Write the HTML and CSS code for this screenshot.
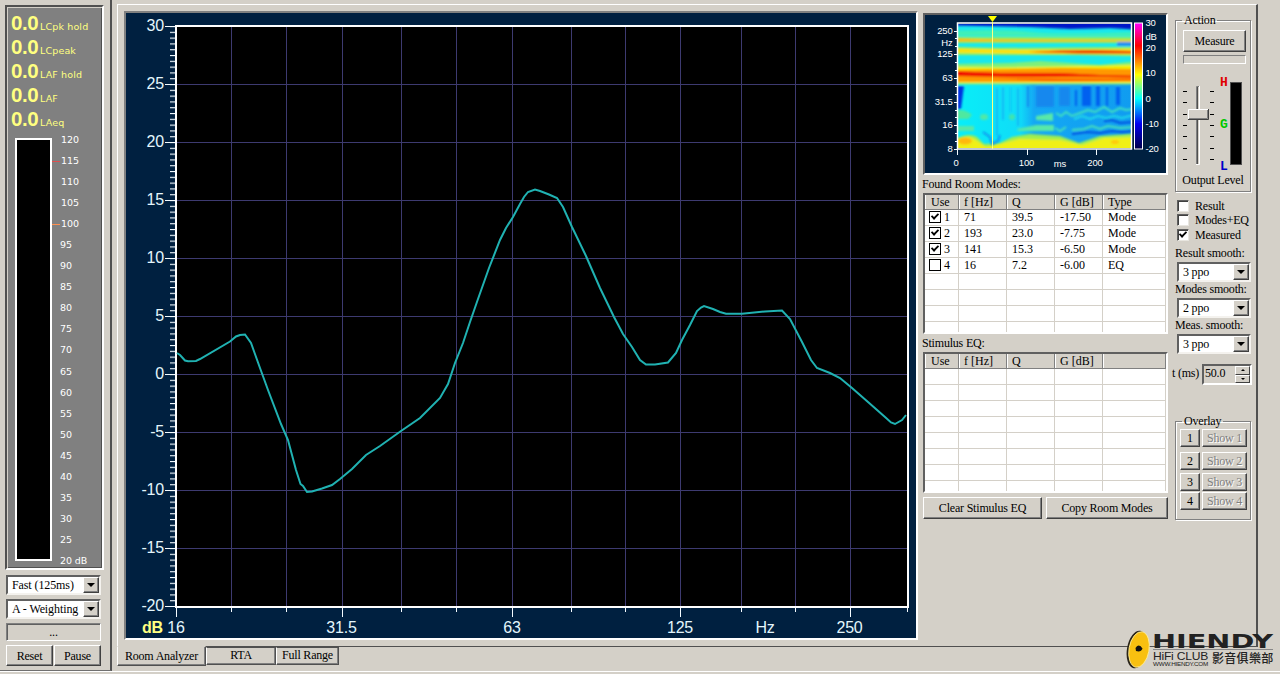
FILE: index.html
```html
<!DOCTYPE html>
<html lang="en">

<head>
  <meta charset="UTF-8">
  <meta name="viewport" content="width=device-width, initial-scale=1.0">
  <title>Room Analyzer</title>
  <link rel="stylesheet" href="styles.css">
</head>

<body>
  <div class="window">
    <div class="level-panel">
      <div class="meter">
        <div class="reading"><b>0.0</b><span>LCpk hold</span></div>
        <div class="reading"><b>0.0</b><span>LCpeak</span></div>
        <div class="reading"><b>0.0</b><span>LAF hold</span></div>
        <div class="reading"><b>0.0</b><span>LAF</span></div>
        <div class="reading"><b>0.0</b><span>LAeq</span></div>
        <div class="level">
          <div class="level-bar"></div>
          <ul class="scale">
            <li class="wide">120</li>
            <li class="wide red">115</li>
            <li class="wide">110</li>
            <li class="wide">105</li>
            <li class="wide orange">100</li>
            <li>95</li>
            <li>90</li>
            <li>85</li>
            <li>80</li>
            <li>75</li>
            <li>70</li>
            <li>65</li>
            <li>60</li>
            <li>55</li>
            <li>50</li>
            <li>45</li>
            <li>40</li>
            <li>35</li>
            <li>30</li>
            <li>25</li>
            <li>20 dB</li>
          </ul>
        </div>
      </div>
      <div class="combo"><span>Fast (125ms)</span><i class="arrow"></i></div>
      <div class="combo"><span>A - Weighting</span><i class="arrow"></i></div>
      <div class="status">...</div>
      <div class="button-row">
        <button>Reset</button>
        <button>Pause</button>
      </div>
    </div>

    <div class="main">
      <div class="page">
        <!-- frequency response -->
        <svg class="chart" viewBox="126 13 790 625" width="790" height="625">
          <defs>
            <pattern id="minor" x="170" y="26" width="6" height="5.8" patternUnits="userSpaceOnUse">
              <rect width="6" height="1.1" fill="#f4fbff"/>
            </pattern>
          </defs>
          <rect x="176" y="26" width="732" height="580" fill="#000"/>
          <path class="grid" d="M231.500 27V606M286.500 27V606M342.500 27V606M401.500 27V606M456.500 27V606M512.500 27V606M571.500 27V606M625.500 27V606M680.500 27V606M741.500 27V606M795.500 27V606M850.500 27V606"/>
          <path class="grid" d="M177 84.500H907M177 142.500H907M177 200.500H907M177 258.500H907M177 316.500H907M177 374.500H907M177 432.500H907M177 490.500H907M177 548.500H907"/>
          <rect x="170" y="26" width="6" height="580" fill="url(#minor)"/>
          <path class="tick" d="M165 26.500H176M165 84.500H176M165 142.500H176M165 200.500H176M165 258.500H176M165 316.500H176M165 374.500H176M165 432.500H176M165 490.500H176M165 548.500H176M165 606.500H176"/>
          <path class="tick" d="M176.500 607V617M342.500 607V617M512.500 607V617M680.500 607V617M850.500 607V617M231.500 607V612M286.500 607V612M401.500 607V612M456.500 607V612M571.500 607V612M625.500 607V612M741.500 607V612M795.500 607V612M907.500 607V612"/>
          <rect x="176" y="26" width="732" height="581" fill="none" stroke="#fff" stroke-width="2"/>
          <polyline class="curve" points="177,353 180,355 185,360.500 188,361.300 196,361 200,359 230,341.500 236,336.500 240,335 245,334.500 251,343 260,368 268,390 281,424 288,440 296,470 300.500,484 303,486 307,492 312,491.500 322,488.500 332,485 340,479 352,469 366,455 380,446 401,431 420,418 440,398 448,384 455,363 463,343 470,322 478,299 489,268 500,240 506,228 513,217 520,204 524,197 528,192 535,189.500 540,191 549,194.500 557,198 563,207 572,227 586,256 600,288 614,317 623,334 632,347 640,360 646,364.500 655,364.500 668,362.500 676,353 682,340 690,325 697,311 701,307.500 704,306 713,309 720,312 726,313.700 742,313.700 765,311.500 782,310.500 790,319 802,342 811,360 817,368 830,373 840,378 852,388 868,402 885,417 891,422.500 895,424 902,420 906,415"/>
          <g class="axis-y">
            <text x="164" y="31">30</text>
            <text x="164" y="89">25</text>
            <text x="164" y="147">20</text>
            <text x="164" y="205">15</text>
            <text x="164" y="263">10</text>
            <text x="164" y="321">5</text>
            <text x="164" y="379">0</text>
            <text x="164" y="437">-5</text>
            <text x="164" y="495">-10</text>
            <text x="164" y="553">-15</text>
            <text x="164" y="611">-20</text>
          </g>
          <g class="axis-x">
            <text x="176" y="633">16</text>
            <text x="341.500" y="633">31.5</text>
            <text x="512" y="633">63</text>
            <text x="680" y="633">125</text>
            <text x="765" y="633">Hz</text>
            <text x="849.500" y="633">250</text>
          </g>
          <text class="axis-unit" x="142" y="633">dB</text>
        </svg>

        <div class="modes">
          <!-- decay spectrogram -->
          <svg class="spectrogram" viewBox="925 15 241 158" width="241" height="158">
            <defs>
              <clipPath id="plot"><rect x="958" y="24" width="173" height="124"/></clipPath>
              <filter id="soft" x="-10%" y="-20%" width="120%" height="140%"><feGaussianBlur stdDeviation="1"/></filter>
              <linearGradient id="bar" x1="0" y1="0" x2="0" y2="1">
                <stop offset="0" stop-color="#f0f"/>
                <stop offset=".18" stop-color="#f00"/>
                <stop offset=".3" stop-color="#ff8000"/>
                <stop offset=".41" stop-color="#ff0"/>
                <stop offset=".5" stop-color="#80ff80"/>
                <stop offset=".6" stop-color="#0ff"/>
                <stop offset=".7" stop-color="#0080ff"/>
                <stop offset=".8" stop-color="#0000f0"/>
                <stop offset="1" stop-color="#000048"/>
              </linearGradient>
              <linearGradient id="base" x1="0" y1="0" x2="1" y2="0">
                <stop offset="0" stop-color="#08eef8"/>
                <stop offset=".36" stop-color="#10dcf8"/>
                <stop offset=".44" stop-color="#14a8f4"/>
                <stop offset="1" stop-color="#109cf0"/>
              </linearGradient>
            </defs>
            <g clip-path="url(#plot)">
              <rect x="957" y="23" width="175" height="127" fill="url(#base)"/>
              <rect x="957" y="23" width="175" height="60" fill="#18e8ec"/>
              <g filter="url(#soft)">
                <path d="M950 20H1140V30L1110 28 1070 29 1030 27 950 25.500Z" fill="#0018c8"/>
                <path d="M950 31Q1000 29 1030 32T1140 32V36H950Z" fill="#40f0b8"/>
                <path d="M950 37H1140V43H950Z" fill="#90f060"/>
                <path d="M950 38.500L1000 39.500 1140 40V41.500H950Z" fill="#ffb800"/>
                <path d="M950 47L1000 48 1140 47V56L1080 55 950 55Z" fill="#a0f058"/>
                <path d="M950 48.500L1020 50 1140 49V54.500L1050 54 950 52.500Z" fill="#ffe000"/>
                <path d="M1028 52L1060 50.500 1090 50 1140 51V53.500L1080 53.500Z" fill="#f03000"/>
                <path d="M950 64L1010 63 1040 61 1100 65 1140 61V70H950Z" fill="#80f078"/>
                <path d="M950 67L1000 67.500 1140 65V84H950Z" fill="#f4f000"/>
                <path d="M950 70L1010 69 1060 68 1140 69V81.500L1070 82 950 82Z" fill="#ff9800"/>
                <path d="M950 71L1000 73 1060 73 1100 75 1140 76V77.500L1080 76.500 1020 77 950 76Z" fill="#f00000"/>
                <path d="M990 78L1060 79 1140 79V80.500L1050 81Z" fill="#ff5000"/>
                <path d="M950 83H1140V84.500H950Z" fill="#78f080"/>
                <path d="M956 86H964L961 109H956Z" fill="#0030e0"/>
                <path d="M1082 86H1091V106H1082ZM1096 86H1100V106H1096ZM1116 87H1120V105H1116ZM1106 87H1108V106H1106ZM1075 90H1077V106H1075Z" fill="#0060f0"/>
                <path d="M1027 86H1029V107H1027ZM1036 86H1054V107H1036ZM1059 87H1070V106H1059Z" fill="#1888ee"/>
                <path d="M996 88H998V136H996ZM1002 87H1004V120H1002ZM1010 87H1011V112H1010ZM1017 88H1019V126H1017Z" fill="#18b8f4"/>
                <path d="M1117 42H1140V46H1117Z" fill="#2090f0"/>
                <path d="M950 142Q968 131 977 137L984 144 1000 143 1012 137 1030 134 1060 136 1079 143 1100 136 1140 133V152H950Z" fill="#a0ee50"/>
                <path d="M950 142Q966 132 977 141L986 147 1004 143 1020 139 1060 140 1082 145 1104 138 1140 137V152H950Z" fill="#f0f018"/>
                <ellipse cx="965" cy="141" rx="7" ry="3.500" fill="#ffb810"/>
                <ellipse cx="1115" cy="142" rx="4" ry="2" fill="#ffc810"/>
                <path d="M950 112Q963 107 972 115L968 119H950Z" fill="#50e8a0"/>
                <path d="M950 126H974V131H950ZM1017 129L1036 125 1054 125V131H1018ZM1036 116L1053 113V121L1036 120Z" fill="#58e8a8"/>
                <ellipse cx="984" cy="117" rx="4" ry="3" fill="#50e8a8"/>
                <ellipse cx="1012" cy="117" rx="3" ry="3" fill="#40e4b0"/>
              </g>
              <g class="ripples" filter="url(#soft)">
                <path d="M1056 113L1061 116 1066 112 1072 116 1080 113 1088 110 1095 112 1104 107 1112 112 1120 108 1126 110 1134 109" stroke="#40e0c0"/>
                <path d="M1074 119L1082 116 1090 119 1098 116 1106 118 1114 116 1122 118 1134 115" stroke="#20d8e8"/>
                <path d="M1055 128L1060 131 1066 127M1072 130L1084 129 1092 126 1100 129 1108 126 1120 128 1134 127" stroke="#48e0b8"/>
                <path d="M1104 121L1112 120 1120 123 1134 122M1072 134L1087 132 1100 133 1112 131 1122 132 1134 131" stroke="#0050e0"/>
                <path d="M983 132L990 137 992 144 998 141 1000 135" stroke="#1090f0"/>
              </g>
            </g>
            <rect x="957.500" y="23" width="174" height="126" fill="none" stroke="#fff" stroke-width="1.500"/>
            <path d="M992.500 22V149" stroke="#ffff80"/>
            <path d="M988 16H997L992.500 22Z" fill="#ff0"/>
            <rect x="1134.500" y="23" width="8" height="126" fill="url(#bar)" stroke="#fff"/>
            <path class="tick" d="M954 31.500H957M954 54.500H957M954 78.500H957M954 102.500H957M954 125.500H957M954 149.500H957M957.500 149V155M1027.500 149V155M1096.500 149V155M955 38.500H957M955 46.500H957M955 62.500H957M955 70.500H957M955 86.500H957M955 94.500H957M955 110.500H957M955 117.500H957M955 133.500H957M955 141.500H957"/>
            <g class="small end">
              <text x="952.500" y="34">250</text>
              <text x="952.500" y="46">Hz</text>
              <text x="952.500" y="57">125</text>
              <text x="952.500" y="81">63</text>
              <text x="952.500" y="105">31.5</text>
              <text x="952.500" y="128">16</text>
              <text x="952.500" y="152">8</text>
            </g>
            <g class="small">
              <text x="1145.500" y="26">30</text>
              <text x="1145.500" y="40">dB</text>
              <text x="1145.500" y="51">20</text>
              <text x="1145.500" y="76">10</text>
              <text x="1145.500" y="102">0</text>
              <text x="1145.500" y="127">-10</text>
              <text x="1145.500" y="152">-20</text>
            </g>
            <g class="small mid">
              <text x="956" y="166">0</text>
              <text x="1026.500" y="166">100</text>
              <text x="1060" y="166.500">ms</text>
              <text x="1095" y="166">200</text>
            </g>
          </svg>

          <div class="caption">Found Room Modes:</div>
          <div class="list">
            <table>
              <thead>
                <tr><th>Use</th><th>f [Hz]</th><th>Q</th><th>G [dB]</th><th>Type</th></tr>
              </thead>
              <tbody>
                <tr><td><i class="check on"></i>1</td><td>71</td><td>39.5</td><td>-17.50</td><td>Mode</td></tr>
                <tr><td><i class="check on"></i>2</td><td>193</td><td>23.0</td><td>-7.75</td><td>Mode</td></tr>
                <tr><td><i class="check on"></i>3</td><td>141</td><td>15.3</td><td>-6.50</td><td>Mode</td></tr>
                <tr><td><i class="check"></i>4</td><td>16</td><td>7.2</td><td>-6.00</td><td>EQ</td></tr>
                <tr><td></td><td></td><td></td><td></td><td></td></tr>
                <tr><td></td><td></td><td></td><td></td><td></td></tr>
                <tr><td></td><td></td><td></td><td></td><td></td></tr>
                <tr><td></td><td></td><td></td><td></td><td></td></tr>
              </tbody>
            </table>
          </div>

          <div class="caption">Stimulus EQ:</div>
          <div class="list">
            <table>
              <thead>
                <tr><th>Use</th><th>f [Hz]</th><th>Q</th><th>G [dB]</th><th></th></tr>
              </thead>
              <tbody>
                <tr><td></td><td></td><td></td><td></td><td></td></tr>
                <tr><td></td><td></td><td></td><td></td><td></td></tr>
                <tr><td></td><td></td><td></td><td></td><td></td></tr>
                <tr><td></td><td></td><td></td><td></td><td></td></tr>
                <tr><td></td><td></td><td></td><td></td><td></td></tr>
                <tr><td></td><td></td><td></td><td></td><td></td></tr>
                <tr><td></td><td></td><td></td><td></td><td></td></tr>
                <tr><td></td><td></td><td></td><td></td><td></td></tr>
              </tbody>
            </table>
          </div>
          <div class="list-buttons">
            <button>Clear Stimulus EQ</button>
            <button>Copy Room Modes</button>
          </div>
        </div>

        <div class="controls">
          <fieldset class="action">
            <legend>Action</legend>
            <button>Measure</button>
            <div class="progress"></div>
            <svg class="output" viewBox="1180 74 66 98" width="66" height="98">
              <path d="M1183 91.500H1187M1183 102.500H1187M1183 114.500H1187M1183 125.500H1187M1183 136.500H1187M1183 148.500H1187M1183 159.500H1187M1210 91.500H1214M1210 102.500H1214M1210 114.500H1214M1210 125.500H1214M1210 136.500H1214M1210 148.500H1214M1210 159.500H1214" stroke="#000"/>
              <path d="M1196.500 165V86.500H1199" fill="none" stroke="#808080"/>
              <path d="M1197.500 87V164" stroke="#505050"/>
              <path d="M1199.500 86V164.500H1196" fill="none" stroke="#fff"/>
              <rect x="1188" y="109" width="21" height="11" fill="#d4d0c8"/>
              <path d="M1188.500 119V109.500H1208" fill="none" stroke="#fff"/>
              <path d="M1189 118.500H1207.500V110" fill="none" stroke="#808080"/>
              <path d="M1188 119.500H1208.500V109" fill="none" stroke="#404040"/>
              <rect x="1230.500" y="82.500" width="11" height="82" fill="#000" stroke="#505050"/>
              <text class="mark high" x="1220" y="85.500">H</text>
              <text class="mark good" x="1220" y="127.500">G</text>
              <text class="mark low" x="1220" y="169.500">L</text>
            </svg>
            <div class="output-label">Output Level</div>
          </fieldset>

          <div class="options">
            <label><i class="check"></i>Result</label>
            <label><i class="check"></i>Modes+EQ</label>
            <label><i class="check on"></i>Measured</label>
          </div>

          <div class="smooth">
            <span>Result smooth:</span>
            <div class="combo"><span>3 ppo</span><i class="arrow"></i></div>
            <span>Modes smooth:</span>
            <div class="combo"><span>2 ppo</span><i class="arrow"></i></div>
            <span>Meas. smooth:</span>
            <div class="combo"><span>3 ppo</span><i class="arrow"></i></div>
          </div>

          <div class="time">
            <span>t (ms)</span>
            <div class="spinner">
              <span>50.0</span>
              <div class="spin"><i class="up"></i><i class="down"></i></div>
            </div>
          </div>

          <fieldset class="overlay">
            <legend>Overlay</legend>
            <div class="overlay-grid">
              <button>1</button><button disabled>Show 1</button>
              <button>2</button><button disabled>Show 2</button>
              <button>3</button><button disabled>Show 3</button>
              <button>4</button><button disabled>Show 4</button>
            </div>
          </fieldset>
        </div>
      </div>

      <div class="tabs">
        <div class="tab active">Room Analyzer</div>
        <div class="tab rta">RTA</div>
        <div class="tab range">Full Range</div>
      </div>
    </div>
  </div>

  <svg class="logo" viewBox="0 0 152 42" width="152" height="42">
    <ellipse cx="12" cy="21.500" rx="10" ry="19" fill="#2a2418" transform="rotate(10 12 21.500)"/>
    <ellipse cx="14" cy="21.500" rx="10" ry="18" fill="#f8c010" stroke="#fff0a0" stroke-width=".8" transform="rotate(10 14 21.500)"/>
    <path d="M10.500 20Q14 15 17.500 20.500Q16 24.500 11 23Z" fill="#111"/>
    <text class="logo-name" x="27" y="19.500" textLength="121" lengthAdjust="spacingAndGlyphs">HIENDY</text>
    <path d="M28 21.500H148" stroke="#888"/>
    <text class="logo-club" x="28" y="32" textLength="55" lengthAdjust="spacingAndGlyphs">HiFi CLUB</text>
    <text class="logo-url" x="28" y="37.500" textLength="55" lengthAdjust="spacingAndGlyphs">WWW.HIENDY.COM</text>
    <text class="logo-cjk" x="87" y="35" textLength="61">影音俱樂部</text>
  </svg>
</body>

</html>
```
FILE: styles.css
```css
* {
  box-sizing: border-box;
}

body {
  margin: 0;
  width: 1280px;
  height: 674px;
  overflow: hidden;
  background: #d4d0c8;
  color: #000;
  font-family: "Liberation Serif", serif;
  font-size: 12px;
  letter-spacing: -0.2px;
  line-height: 14px;
}

.window {
  display: flex;
  height: 672px;
  border-bottom: 1px solid #fff;
}

button {
  padding: 0;
  border: 1px solid;
  border-color: #fff #404040 #404040 #fff;
  box-shadow: inset -1px -1px #808080;
  background: #d4d0c8;
  color: #000;
  font: inherit;
  letter-spacing: inherit;
}

button:disabled {
  color: #808080;
  text-shadow: 1px 1px #fff;
}

/* left level meter */
.level-panel {
  width: 112px;
  padding: 5px 10px 0 5px;
  border-right: 2px solid #505050;
  border-bottom: 1px solid #707070;
}

.meter {
  width: 99px;
  height: 565px;
  margin-bottom: 5px;
  padding: 4px 0 0 3px;
  border: 2px solid;
  border-color: #505050 #fff #fff #505050;
  box-shadow: inset 1px 1px #d4d0c8, inset -1px -1px #505050;
  background: #808080;
}

.reading {
  display: flex;
  align-items: baseline;
  height: 24px;
  padding-left: 1px;
  color: #ffff80;
  line-height: 24px;
}

.reading b {
  width: 29px;
  font-family: "Liberation Sans", sans-serif;
  font-size: 20.5px;
  letter-spacing: -0.4px;
}

.reading span {
  font-family: "DejaVu Sans", sans-serif;
  font-size: 9.5px;
  letter-spacing: 0.15px;
}

.level {
  display: flex;
  padding: 7px 0 0 5px;
}

.level-bar {
  width: 37px;
  height: 423px;
  border: 2px solid #fff;
  background: #000;
}

.scale {
  display: flex;
  flex-direction: column;
  justify-content: space-between;
  height: 433px;
  margin: -4px 0 0;
  padding: 0;
  list-style: none;
  color: #fff;
  font-family: "DejaVu Sans", sans-serif;
  font-size: 9.5px;
  letter-spacing: -0.1px;
  line-height: 12px;
}

.scale li {
  display: flex;
  align-items: center;
}

.scale li::before {
  content: "";
  width: 8px;
  border-top: 1px solid transparent;
}

.scale .wide::before {
  margin-right: 1px;
}

.scale .red::before {
  border-color: #e05050;
}

.scale .orange::before {
  border-color: #ff9050;
}

/* drop-down boxes */
.combo {
  display: flex;
  height: 20px;
  border: 2px solid;
  border-color: #606060 #f4f2ee #f4f2ee #606060;
  background: #fff;
}

.combo span {
  flex: 1;
  padding-left: 4px;
  line-height: 17px;
  white-space: nowrap;
}

.arrow {
  display: flex;
  align-items: center;
  justify-content: center;
  width: 16px;
  border: 1px solid;
  border-color: #fff #404040 #404040 #fff;
  box-shadow: inset -1px -1px #808080;
  background: #d4d0c8;
}

.arrow::before {
  content: "";
  border: 4px solid transparent;
  border-top-color: #000;
  border-bottom: 0;
}

.level-panel .combo {
  width: 95px;
  margin: 0 0 4px 1px;
}

.level-panel .combo span {
  letter-spacing: -0.1px;
}

.status {
  width: 95px;
  height: 18px;
  margin: 0 0 4px 1px;
  border: 1px solid;
  border-color: #808080 #fff #fff #808080;
  box-shadow: inset 1px 1px #606060;
  line-height: 16px;
  text-align: center;
}

.button-row {
  display: grid;
  grid-template-columns: 47px 47px;
  gap: 1px;
  height: 21px;
  margin-left: 1px;
}

/* analyzer page */
.main {
  padding: 4px 0 0 5px;
}

.page {
  display: flex;
  width: 1141px;
  height: 643px;
  padding: 6px 0 0 6px;
  border: 1px solid;
  border-color: #fff #505050 #505050 #fff;
  border-right-width: 2px;
}

.chart {
  box-sizing: content-box;
  border: 2px solid;
  border-color: #808080 #fff #fff #808080;
  background: #002040;
}

.grid {
  fill: none;
  stroke: #3d3a70;
}

.tick {
  fill: none;
  stroke: #f4fbff;
}

.curve {
  fill: none;
  stroke: #20b2b2;
  stroke-width: 2;
}

.axis-y,
.axis-x,
.axis-unit {
  fill: #e4f6fc;
  font-family: "Liberation Sans", sans-serif;
  font-size: 16px;
  letter-spacing: -0.2px;
}

.axis-y {
  text-anchor: end;
}

.axis-x {
  text-anchor: middle;
}

.axis-unit {
  fill: #ffff80;
  font-weight: bold;
}

.modes {
  width: 246px;
  margin: 2px 0 0 4px;
}

.spectrogram {
  box-sizing: content-box;
  display: block;
  margin-left: 1px;
  border: 2px solid;
  border-color: #606060 #fff #fff #606060;
  background: #002040;
}

.small {
  fill: #fff;
  font-family: "Liberation Sans", sans-serif;
  font-size: 9.5px;
  letter-spacing: -0.2px;
}

.end {
  text-anchor: end;
}

.mid {
  text-anchor: middle;
}

.ripples {
  fill: none;
  stroke-width: 2;
}

.caption {
  height: 18px;
  line-height: 18px;
}

.list {
  height: 141px;
  margin-left: 1px;
  overflow: hidden;
  border: 2px solid;
  border-color: #606060 #fff #fff #606060;
  background: #fff;
}

table {
  width: 241px;
  table-layout: fixed;
  border-collapse: separate;
  border-spacing: 0;
}

th,
td {
  height: 16px;
  padding: 0 0 0 5px;
  font-weight: normal;
  line-height: 15px;
  text-align: left;
  vertical-align: top;
  white-space: nowrap;
  letter-spacing: 0;
}

th {
  height: 15px;
  border-right: 1px solid #808080;
  border-bottom: 1px solid #808080;
  box-shadow: inset 1px 0 #fff;
  background: #d4d0c8;
  line-height: 14px;
}

td {
  border-right: 1px solid #d4d0c8;
  border-bottom: 1px solid #d4d0c8;
}

th:nth-child(1) {
  width: 34px;
  padding-left: 6px;
}

th:nth-child(2),
th:nth-child(3),
th:nth-child(4) {
  width: 48px;
}

.check {
  display: inline-block;
  flex: none;
  width: 12px;
  height: 12px;
  border: 1px solid;
  border-color: #606060 #e8e6e0 #e8e6e0 #606060;
  box-shadow: inset 1px 1px #404040;
  background: #fff;
}

.check.on::before {
  content: "";
  display: block;
  width: 6px;
  height: 3px;
  margin: 1px 0 0 1px;
  border: solid #000;
  border-width: 0 0 2px 2px;
  box-sizing: content-box;
  transform: rotate(-45deg) scale(0.9);
}

td .check {
  margin: 1px 3px 0 0;
  border-color: #000;
  box-shadow: none;
  vertical-align: top;
}

td:first-child {
  padding-left: 4px;
}

.list-buttons {
  display: grid;
  grid-template-columns: 119px 122px;
  gap: 4px;
  height: 22px;
  margin: 4px 0 0 1px;
}

/* right hand controls */
.controls {
  width: 80px;
  margin-left: 4px;
}

fieldset {
  margin: 0 0 0 3px;
  padding: 0;
  border: 1px solid #808080;
  box-shadow: 1px 1px #fff, inset 1px 1px #fff;
  min-width: 0;
}

legend {
  margin-left: 6px;
  padding: 0 2px;
}

.action {
  width: 76px;
  height: 179px;
  margin-top: 2px;
}

.action button {
  display: block;
  width: 63px;
  height: 22px;
  margin: 3px 0 0 7px;
}

.progress {
  width: 63px;
  height: 9px;
  margin: 3px 0 0 7px;
  border: 1px solid;
  border-color: #808080 #fff #fff #808080;
}

.output {
  display: block;
  margin: 10px 0 0 4px;
}

.mark {
  font-family: "Liberation Mono", monospace;
  font-size: 13px;
  font-weight: bold;
}

.high {
  fill: #e00000;
}

.good {
  fill: #00c800;
}

.low {
  fill: #0000c8;
}

.output-label {
  margin-top: 1px;
  text-align: center;
}

.options {
  display: grid;
  grid-template-rows: 15px 14px 15px;
  margin: 6px 0 0 5px;
}

.options label {
  display: flex;
  align-items: center;
  gap: 6px;
  line-height: 12px;
}

.smooth {
  display: flex;
  flex-direction: column;
  padding: 4px 0 0 3px;
}

.smooth > span {
  height: 16px;
  line-height: 14px;
}

.smooth .combo {
  width: 74px;
  margin-left: 2px;
}

.time {
  display: flex;
  gap: 2px;
  margin: 10px 0 29px;
  line-height: 18px;
}

.time > span {
  width: 28px;
  white-space: nowrap;
}

.spinner {
  display: flex;
  justify-content: space-between;
  width: 50px;
  height: 21px;
  padding-left: 1px;
  border: 2px solid;
  border-color: #606060 #fff #fff #606060;
  line-height: 15px;
}

.spin {
  display: grid;
  grid-template-rows: 1fr 1fr;
  width: 15px;
}

.spin i {
  display: flex;
  align-items: center;
  justify-content: center;
  border: 1px solid;
  border-color: #fff #404040 #404040 #fff;
}

.spin i::before {
  content: "";
  border: 2px solid transparent;
}

.up::before {
  border-top: 0 !important;
  border-bottom-color: #000 !important;
}

.down::before {
  border-bottom: 0 !important;
  border-top-color: #000 !important;
}

.overlay {
  width: 76px;
  height: 106px;
}

.overlay-grid {
  display: grid;
  grid-template-columns: 20px 45px;
  grid-template-rows: 23px 21px 19px 19px;
  column-gap: 2px;
  padding: 1px 0 0 4px;
}

.overlay-grid button {
  height: 18px;
}

/* page tabs */
.tabs {
  display: flex;
  align-items: flex-start;
  height: 21px;
}

.tab {
  height: 18px;
  border: 1px solid;
  border-color: #505050 #505050 #505050 #fff;
  box-shadow: inset -1px -1px #808080;
  line-height: 14px;
  text-align: center;
}

.tab.active {
  width: 89px;
  height: 20px;
  margin-top: -1px;
  border-top-color: #d4d0c8;
  background: #d4d0c8;
  line-height: 19px;
}

.rta {
  width: 70px;
}

.range {
  width: 63px;
}

/* site mark over the bottom right corner */
.logo {
  position: absolute;
  left: 1125px;
  top: 628px;
}

.logo-name {
  font-family: "DejaVu Sans", sans-serif;
  font-size: 20px;
  font-weight: bold;
  letter-spacing: 0;
  fill: #222;
}

.logo-club {
  font-family: "Liberation Sans", sans-serif;
  font-size: 10.5px;
  fill: #222;
}

.logo-url {
  font-family: "Liberation Sans", sans-serif;
  font-size: 4.5px;
  fill: #222;
}

.logo-cjk {
  font-family: "Liberation Sans", "Noto Sans CJK TC", sans-serif;
  font-size: 12px;
  font-weight: 500;
  fill: #222;
}
```
